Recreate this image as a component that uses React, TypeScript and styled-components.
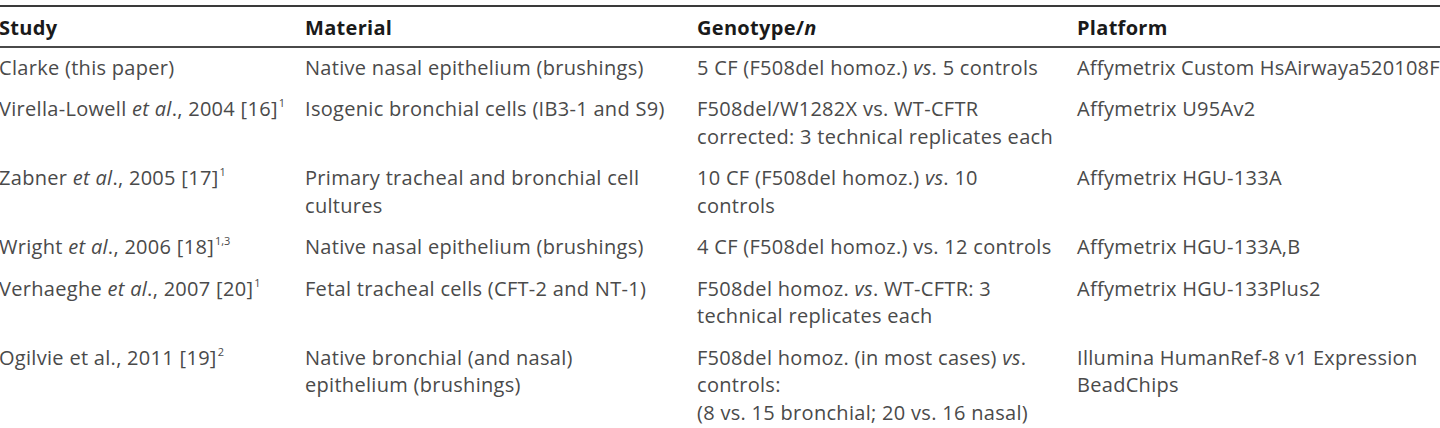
import React from "react";
import styled, { createGlobalStyle } from "styled-components";

const Global = createGlobalStyle`
  html, body { margin: 0; padding: 0; background: #ffffff; }
  body { font-family: "Open Sans", "Noto Sans", sans-serif; }
`;

const Page = styled.div`
  width: 1440px;
  height: 428px;
  overflow: hidden;
  background: #fff;
  padding-top: 5px;
  box-sizing: border-box;
`;

const Table = styled.div`
  margin-left: -1px;
  width: 1480px;
  border-top: 2px solid #3a3a3a;
`;

const Row = styled.div<{ $head?: boolean }>`
  display: grid;
  grid-template-columns: 306px 392px 380px 1fr;
  padding: ${(p) => (p.$head ? "7px 0 4px" : "6px 0 8px")};
  border-bottom: ${(p) => (p.$head ? "2px solid #4a4a4a" : "none")};
`;

const Cell = styled.div<{ $head?: boolean }>`
  font-size: 20px;
  letter-spacing: 0.3px;
  line-height: 27.5px;
  white-space: nowrap;
  color: ${(p) => (p.$head ? "#1a1a1a" : "#4a4a4a")};
  font-weight: ${(p) => (p.$head ? 700 : 400)};
`;

const Tight = styled.span`
  letter-spacing: 0.2px;
`;

const Sup = styled.sup`
  font-size: 11px;
  line-height: 0;
  vertical-align: 0;
  position: relative;
  top: -9px;
  margin-left: 1px;
  letter-spacing: 0;
`;

const rows: React.ReactNode[][] = [
  [
    <>Clarke (this paper)</>,
    <>Native nasal epithelium (brushings)</>,
    <>5 CF (F508del homoz.) <i>vs</i>. 5 controls</>,
    <Tight>Affymetrix Custom HsAirwaya520108F</Tight>,
  ],
  [
    <>Virella-Lowell <i>et al</i>., 2004 [16]<Sup>1</Sup></>,
    <>Isogenic bronchial cells (IB3-1 and S9)</>,
    <>F508del/W1282X vs. WT-CFTR<br />corrected: 3 technical replicates each</>,
    <>Affymetrix U95Av2</>,
  ],
  [
    <>Zabner <i>et al</i>., 2005 [17]<Sup>1</Sup></>,
    <>Primary tracheal and bronchial cell<br />cultures</>,
    <>10 CF (F508del homoz.) <i>vs</i>. 10<br />controls</>,
    <>Affymetrix HGU-133A</>,
  ],
  [
    <>Wright <i>et al</i>., 2006 [18]<Sup>1,3</Sup></>,
    <>Native nasal epithelium (brushings)</>,
    <>4 CF (F508del homoz.) vs. 12 controls</>,
    <>Affymetrix HGU-133A,B</>,
  ],
  [
    <>Verhaeghe <i>et al</i>., 2007 [20]<Sup>1</Sup></>,
    <>Fetal tracheal cells (CFT-2 and NT-1)</>,
    <>F508del homoz. <i>vs</i>. WT-CFTR: 3<br />technical replicates each</>,
    <>Affymetrix HGU-133Plus2</>,
  ],
  [
    <>Ogilvie et al., 2011 [19]<Sup>2</Sup></>,
    <>Native bronchial (and nasal)<br />epithelium (brushings)</>,
    <>F508del homoz. (in most cases) <i>vs</i>.<br />controls:<br />(8 vs. 15 bronchial; 20 vs. 16 nasal)</>,
    <>Illumina HumanRef-8 v1 Expression<br />BeadChips</>,
  ],
];

export default function App() {
  return (
    <>
      <Global />
      <Page>
        <Table>
          <Row $head>
            <Cell $head>Study</Cell>
            <Cell $head>Material</Cell>
            <Cell $head>Genotype/<i>n</i></Cell>
            <Cell $head>Platform</Cell>
          </Row>
          {rows.map((r, i) => (
            <Row key={i}>
              {r.map((c, j) => (
                <Cell key={j}>{c}</Cell>
              ))}
            </Row>
          ))}
        </Table>
      </Page>
    </>
  );
}
